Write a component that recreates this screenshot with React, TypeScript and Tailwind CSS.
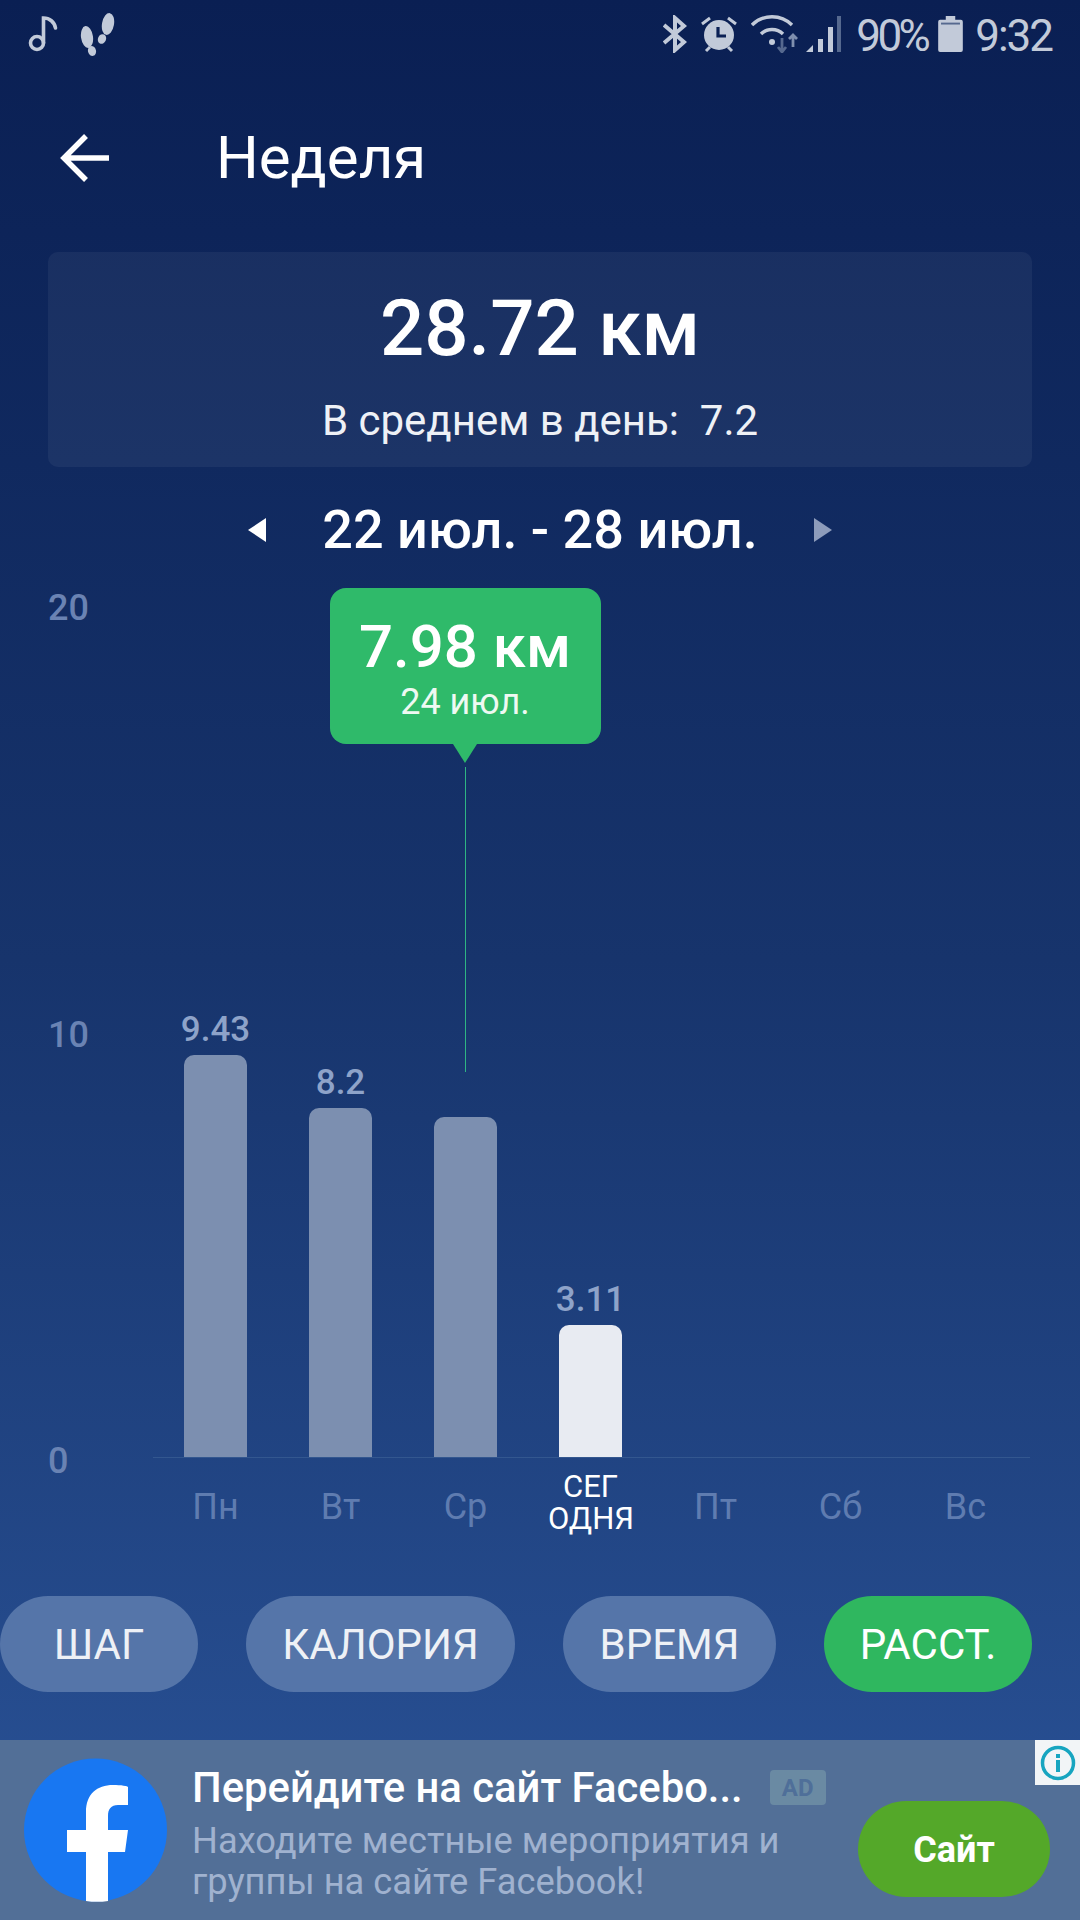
import React from "react";

const days = [
  { label: "Пн", value: 9.43, show: "9.43" },
  { label: "Вт", value: 8.2, show: "8.2" },
  { label: "Ср", value: 7.98, show: "", selected: true },
  { label: "СЕГ ОДНЯ", value: 3.11, show: "3.11", today: true },
  { label: "Пт", value: 0, show: "" },
  { label: "Сб", value: 0, show: "" },
  { label: "Вс", value: 0, show: "" },
];

const pills = [
  { t: "ШАГ", w: "w-[198px]" },
  { t: "КАЛОРИЯ", w: "w-[269px]" },
  { t: "ВРЕМЯ", w: "w-[213px]" },
  { t: "РАССТ.", w: "w-[208px]", active: true },
];

function Music() {
  return (
    <svg width="30" height="38" viewBox="0 0 30 38" fill="none" stroke="#c2cad9" strokeWidth="3.6">
      <circle cx="9" cy="28" r="6.5" />
      <path d="M15.5 28V3c6 0 11 4 12 10" strokeLinecap="round" />
    </svg>
  );
}
function Steps() {
  return (
    <svg width="35" height="43" viewBox="0 0 35 43" fill="#c2cad9">
      <ellipse cx="7" cy="24" rx="6" ry="11" transform="rotate(-8 7 24)" />
      <ellipse cx="12" cy="38" rx="4" ry="5" transform="rotate(-15 12 38)" />
      <ellipse cx="28" cy="11" rx="6" ry="11" transform="rotate(10 28 11)" />
      <ellipse cx="22" cy="26" rx="4" ry="5" transform="rotate(25 22 26)" />
    </svg>
  );
}
function Bluetooth() {
  return (
    <svg width="24" height="38" viewBox="0 0 24 38" fill="none" stroke="#c2cad9" strokeWidth="4">
      <path d="M1 10l20 17-9 8V3l9 8L1 28" />
    </svg>
  );
}
function Alarm() {
  return (
    <svg width="36" height="38" viewBox="0 0 36 38">
      <circle cx="18" cy="20" r="15" fill="#c2cad9" />
      <path d="M1 9l8-6M35 9l-8-6M5 36l4-4M31 36l-4-4" stroke="#c2cad9" strokeWidth="3" />
      <path d="M17 12v9h8" stroke="#0b2055" strokeWidth="3.2" fill="none" />
    </svg>
  );
}
function Wifi() {
  return (
    <svg width="48" height="38" viewBox="0 0 48 38" fill="none" stroke="#c2cad9" strokeWidth="3.4">
      <path d="M1 10c11-11 29-11 40 0" />
      <path d="M10 19c6-6 16-6 22 0" />
      <circle cx="21" cy="27" r="3" fill="#c2cad9" stroke="none" />
      <path d="M31 23v14M27 32l4 5 4-5" stroke="#56698f" strokeWidth="2.8" />
      <path d="M42 32V20M38 24l4-4 4 4" stroke="#7f8fae" strokeWidth="2.8" />
    </svg>
  );
}
function Signal() {
  return (
    <svg width="36" height="36" viewBox="0 0 36 36">
      <path d="M0 36l7-7v7z" fill="#c2cad9" />
      <rect x="12" y="23" width="5" height="13" fill="#c2cad9" />
      <rect x="22" y="11" width="5" height="25" fill="#c2cad9" />
      <rect x="31" y="0" width="4" height="36" fill="#56698f" />
    </svg>
  );
}
function Battery() {
  return (
    <svg width="25" height="36" viewBox="0 0 26 38">
      <path d="M8 0h10v4h6a2 2 0 0 1 2 2v30a2 2 0 0 1-2 2H2a2 2 0 0 1-2-2V6a2 2 0 0 1 2-2h6z" fill="#c2cad9" />
      <rect x="3" y="7" width="20" height="2" fill="#56698f" />
    </svg>
  );
}
function Fb() {
  return (
    <svg width="143" height="144" viewBox="0 0 143 144" className="shrink-0">
      <circle cx="71.5" cy="72" r="71.5" fill="#1877f2" />
      <path
        d="M62 143V94H43V72h19V54c0-18 11-27 27-27 8 0 15 1 15 2v18H94c-7 0-10 4-10 11v14h20l-3 22H84v49a72 72 0 0 1-22 0z"
        fill="#fff"
      />
    </svg>
  );
}

export default function App() {
  return (
    <div className="w-[1080px] h-[1920px] flex flex-col overflow-hidden bg-gradient-to-b from-[#0a1f53] via-[#17346c] to-[#2a5398] font-['Roboto',sans-serif] text-white">
      {/* status bar */}
      <div className="h-[68px] pl-[28px] pr-[28px] flex items-center justify-between">
        <div className="flex items-center gap-[22px]">
          <Music />
          <Steps />
        </div>
        <div className="flex items-center text-[#c2cad9] text-[44px]">
          <Bluetooth />
          <span className="w-[14px]" />
          <Alarm />
          <span className="w-[14px]" />
          <Wifi />
          <span className="w-[7px]" />
          <Signal />
          <span className="w-[14px]" />
          <span className="mt-[4px] tracking-[-3.5px] w-[72px]">90%</span>
          <span className="w-[10px]" />
          <Battery />
          <span className="w-[12px]" />
          <span className="mt-[4px] tracking-[-2px]">9:32</span>
        </div>
      </div>

      {/* header */}
      <div className="h-[108px] mt-[36px] pl-[60px] flex items-center">
        <svg width="50" height="50" viewBox="0 0 50 50" fill="none" stroke="#fff" strokeWidth="5.5">
          <path d="M49 25H4M26 3L4 25l22 22" />
        </svg>
        <span className="ml-[106px] text-[60px] leading-none">Неделя</span>
      </div>

      {/* summary card */}
      <div className="mx-[48px] mt-[40px] h-[215px] rounded-[10px] bg-white/[0.05] flex flex-col items-center">
        <div className="mt-[32px] text-[78px] leading-[90px] font-medium">28.72 км</div>
        <div className="mt-[23px] text-[42px] leading-[48px] text-[#eef1f6] whitespace-pre">В среднем в день:  7.2</div>
      </div>

      {/* date row */}
      <div className="mt-[33px] h-[60px] flex items-center justify-center">
        <svg width="18" height="24" viewBox="0 0 18 24" fill="#fff"><path d="M18 0v24L0 12z" /></svg>
        <span className="mx-[56px] text-[54px] leading-none font-medium">22 июл. - 28 июл.</span>
        <svg width="18" height="24" viewBox="0 0 18 24" fill="#8d9cbb"><path d="M0 0v24l18-12z" /></svg>
      </div>

      {/* chart */}
      <div className="relative mt-[47px] h-[851px] flex">
        <div className="w-[153px] -mt-[17px] -mb-[21px] pl-[48px] flex flex-col justify-between text-[36px] leading-[36px] font-medium text-[#6a83b3]">
          <span>20</span>
          <span>10</span>
          <span>0</span>
        </div>
        <div className="w-[877px] flex items-end border-b-[1px] border-[#33578f]">
          {days.map((d) => (
            <div key={d.label} className="relative w-[125px] flex flex-col items-center justify-end">
              {d.show && <span className="mb-[5px] text-[35px] leading-[40px] font-medium text-[#8ea3c9]">{d.show}</span>}
              <div
                className={
                  "w-[63px] rounded-t-[10px] " + (d.today ? "bg-[#e8ebf2]" : "bg-[#7c8fb0]")
                }
                style={{ height: d.value * 42.6 }}
              />
              {d.selected && (
                <div className="absolute bottom-[339px] left-[62px] w-0 flex flex-col items-center">
                  <div className="w-[271px] h-[156px] shrink-0 rounded-[16px] bg-[#2fba6a] flex flex-col items-center">
                    <span className="mt-[26px] text-[60px] leading-[66px] font-medium">7.98 км</span>
                    <span className="mt-[2px] text-[36px] leading-[40px] text-[#eef9f2]">24 июл.</span>
                  </div>
                  <svg width="24" height="19" viewBox="0 0 24 19" className="shrink-0" fill="#2fba6a"><path d="M0 0h24L12 19z" /></svg>
                  <div className="mt-[4px] w-[1px] h-[305px] mb-[46px] shrink-0 bg-[#2fb583]" />
                </div>
              )}
              <div
                className={
                  "absolute top-full w-[125px] text-center whitespace-normal " +
                  (d.today
                    ? "mt-[14px] px-[20px] text-[31px] leading-[32px] text-white"
                    : "mt-[30px] text-[36px] leading-[40px] text-[#5f7cb0]")
                }
              >
                {d.label}
              </div>
            </div>
          ))}
        </div>
      </div>

      {/* pills */}
      <div className="mt-[138px] flex gap-[48px]">
        {pills.map((p) => (
          <div
            key={p.t}
            className={
              "h-[96px] pt-[1px] rounded-full flex items-center justify-center text-[42px] leading-none " +
              p.w +
              " " +
              (p.active ? "bg-[#2fb75f] text-white" : "bg-[#5575a9] text-[#eef1f6]")
            }
          >
            {p.t}
          </div>
        ))}
      </div>

      {/* ad */}
      <div className="relative mt-[48px] h-[180px] bg-[#526f97] pl-[24px] pr-[30px] flex items-center">
        <Fb />
        <div className="ml-[25px] mt-[7px] w-[640px] flex flex-col">
          <div className="flex items-center">
            <span className="text-[41.8px] leading-[46px] font-medium whitespace-nowrap">Перейдите на сайт Facebo...</span>
            <span className="ml-[27px] w-[56px] h-[35px] rounded-[4px] bg-[#6a8aa3] text-[#4f6f99] text-[24px] font-bold flex items-center justify-center">AD</span>
          </div>
          <div className="mt-[9px] text-[36.3px] leading-[41.5px] text-[#a0b2cf]">
            Находите местные мероприятия и
            <br />
            группы на сайте Facebook!
          </div>
        </div>
        <div className="ml-auto mt-[37px] pt-[3px] w-[192px] h-[96px] rounded-full bg-[#54a829] flex items-center justify-center text-[36px] font-bold">
          Сайт
        </div>
        <div className="absolute right-0 top-0 w-[45px] h-[45px] bg-[#f2f5f7] flex items-center justify-center">
          <svg width="36" height="36" viewBox="0 0 36 36" fill="none" stroke="#17a5c0" strokeWidth="3.5">
            <circle cx="18" cy="18" r="15.5" />
            <path d="M18 15v12M18 9v4" strokeWidth="4" />
          </svg>
        </div>
      </div>
    </div>
  );
}
